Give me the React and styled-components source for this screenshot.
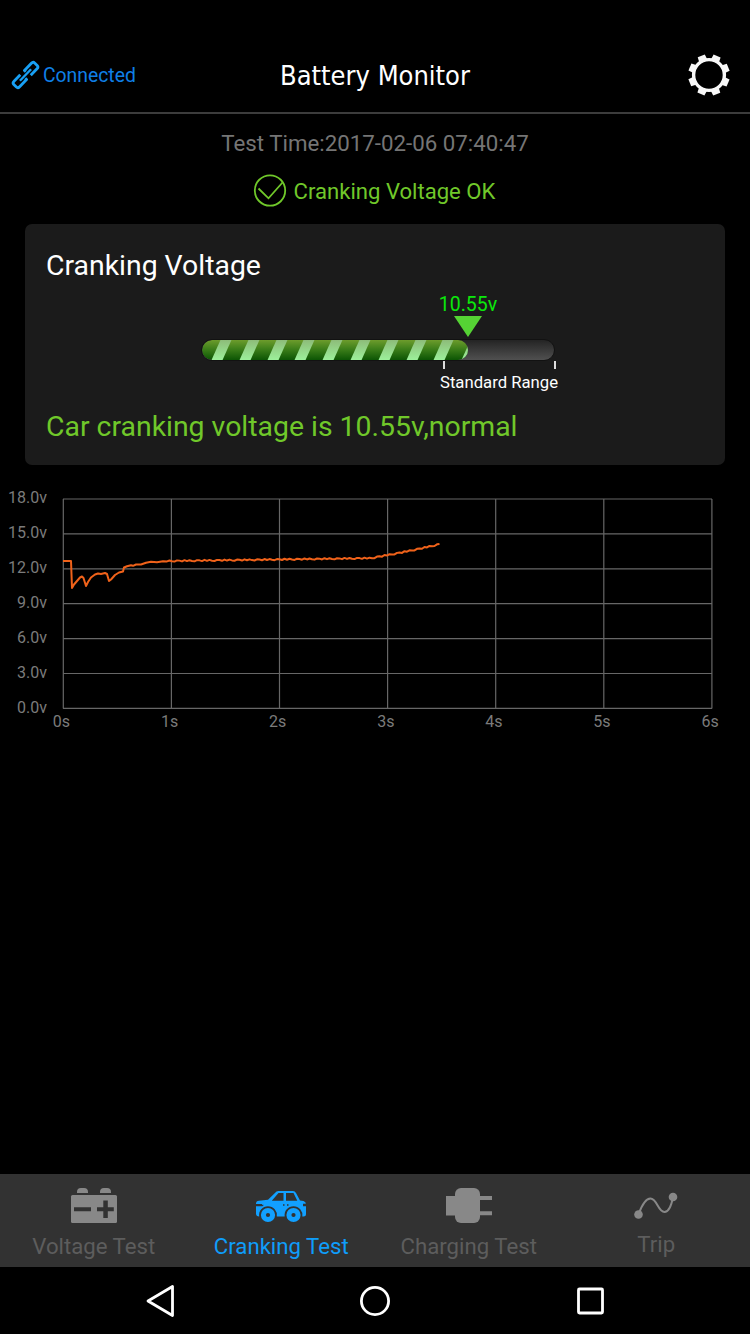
import React from 'react';
import styled, { createGlobalStyle } from 'styled-components';

const GlobalStyle = createGlobalStyle`
  * {
    box-sizing: border-box;
  }
  body {
    margin: 0;
    background: #000;
    font-family: Roboto, sans-serif;
  }
`;

const Screen = styled.div`
  width: 750px;
  height: 1334px;
  display: flex;
  flex-direction: column;
  background: #000;
  overflow: hidden;
`;

const Header = styled.header`
  height: 114px;
  padding: 38px 11px 0;
  display: grid;
  grid-template-columns: 1fr auto 1fr;
  align-items: center;
  border-bottom: 2px solid #3c3c3c;
`;

const Connection = styled.div`
  display: flex;
  align-items: center;
  gap: 3px;
  color: #0f7fe6;
  font-size: 19.35px;
  line-height: 30px;
  padding-top: 2px;

  svg {
    margin-bottom: 2px;
  }
`;

const Title = styled.h1`
  margin: 0;
  padding-top: 2px;
  color: #fff;
  font-family: 'DejaVu Sans Condensed', 'DejaVu Sans', sans-serif;
  font-stretch: condensed;
  font-size: 27px;
  font-weight: 400;
  line-height: 36px;
`;

const SettingsButton = styled.button`
  justify-self: end;
  width: 42px;
  height: 42px;
  margin: 0 9px 1px 0;
  padding: 0;
  border: none;
  background: none;
`;

const TestTime = styled.div`
  margin-top: 15px;
  text-align: center;
  line-height: 28px;
  font-size: 22.3px;
  color: #757575;
`;

const Result = styled.div`
  margin-top: 17px;
  height: 34px;
  padding-right: 2px;
  display: flex;
  justify-content: center;
  align-items: center;
  gap: 7px;
  font-size: 22.1px;
  color: #70c82a;
`;

const Card = styled.section`
  height: 241px;
  margin: 16px 25px 0;
  padding: 24px 21px 0;
  border-radius: 7px;
  background: #1b1b1b;
`;

const CardTitle = styled.h2`
  margin: 0;
  color: #fff;
  font-size: 28.4px;
  font-weight: 400;
  line-height: 36px;
`;

const CardText = styled.p`
  margin: 15px 0 0;
  color: #70c82a;
  font-size: 28.4px;
  line-height: 36px;
`;

const Gauge = styled.div`
  width: 354px;
  margin: 9px 0 0 155px;
`;

const Pointer = styled.div`
  width: 80px;
  margin-left: 227px;
  display: flex;
  flex-direction: column;
  align-items: center;
  color: #0be80b;
  font-size: 19.5px;
  line-height: 23px;
`;

const Arrow = styled.div`
  width: 0;
  border-top: 21px solid #55d334;
  border-left: 14.5px solid transparent;
  border-right: 14.5px solid transparent;
`;

const Track = styled.div`
  height: 22px;
  margin-top: 2px;
  border-radius: 11px;
  border: 1px solid #121212;
  background: linear-gradient(#242424, #505050);
  overflow: hidden;
`;

const Fill = styled.div`
  height: 20px;
  padding-left: 14px;
  display: flex;
  gap: 17.3px;
  border-radius: 10px;
  background: linear-gradient(#6d9c2c, #3d7f1a 45%, #0c5504);
  overflow: hidden;
`;

const Stripe = styled.span`
  flex: none;
  width: 10.5px;
  height: 20px;
  background: linear-gradient(#8dbc79, #9cf09a);
  transform: skewX(-24deg);
`;

const Ticks = styled.div`
  width: 113px;
  height: 8px;
  margin-left: 242px;
  border: 2px solid #ddd;
  border-width: 0 2px;
`;

const RangeLabel = styled.div`
  margin-left: 239px;
  padding-top: 3px;
  color: #fff;
  font-size: 16.7px;
  line-height: 22px;
  white-space: nowrap;
`;

const Chart = styled.svg`
  display: block;
  margin-top: 20px;
  font-family: Roboto, sans-serif;
  font-size: 16px;
`;

const TabBar = styled.nav`
  height: 93px;
  margin-top: auto;
  display: grid;
  grid-template-columns: repeat(4, 1fr);
  background: #323232;
`;

const Tab = styled.div`
  display: flex;
  flex-direction: column;
  align-items: center;
  padding-top: ${({ $top }) => $top || 11}px;
  color: ${({ $active }) => ($active ? '#0f9dfa' : '#5d5d5d')};
  font-size: 22.2px;
  line-height: 28px;

  svg {
    margin-bottom: ${({ $gap }) => $gap || 9}px;
    color: ${({ $active }) => ($active ? '#12a0ff' : '#888')};
  }
`;

const SystemBar = styled.div`
  height: 67px;
  padding: 1px 143px 0 144px;
  display: flex;
  justify-content: space-between;
  align-items: center;
`;

const LinkIcon = () => (
  <svg width="29" height="30" viewBox="-14.5 -15 29 30" fill="none" stroke="#18a0f5" strokeWidth="2.800" strokeLinejoin="round">
    <g transform="rotate(-46)">
      <path d="M2.500-2V-3.900H12.500Q15-3.900 15-1.800V1.800Q15 3.900 12.500 3.900H3.500" />
      <path d="M-2.500 2V3.900H-12.500Q-15 3.900-15 1.800V-1.800Q-15-3.900-12.500-3.900H-3.500" />
      <path d="M-8 0H8" strokeWidth="2.400" />
    </g>
  </svg>
);

const GearIcon = () => (
  <svg width="42" height="42" viewBox="-21 -21 42 42" fill="#f8f8f8">
    <circle r="15.400" fill="none" stroke="#f8f8f8" strokeWidth="3.400" />
    {[0, 1, 2, 3, 4, 5, 6, 7].map(i => (
      <path key={i} d="M-4.300-15L-3.800-20.700H3.800L4.300-15z" transform={`rotate(${i * 45 + 23})`} />
    ))}
  </svg>
);

const CheckIcon = () => (
  <svg width="34" height="34" viewBox="0 0 34 34" fill="none" stroke="#70c82a" strokeWidth="1.8">
    <circle cx="17" cy="16.500" r="15.200" />
    <path d="M5.500 14.500l10 9.800L29.500 8.500" />
  </svg>
);

const BatteryIcon = () => (
  <svg width="48" height="38" viewBox="0 0 48 38" fill="currentColor">
    <path d="M7 8V7q0-4 4-4h3q4 0 4 4v1zM30 8V7q0-4 4-4h3q4 0 4 4v1z" />
    <rect x="1" y="10" width="46" height="28" rx="1.500" />
    <path d="M4 22.300h17v4H4zM27 22.300h6.300v-6.800h4.500v6.800h6v4h-6v6.700h-4.500v-6.700H27z" fill="#323232" />
  </svg>
);

const CarIcon = () => (
  <svg width="52" height="38" viewBox="0 0 52 38" fill="currentColor">
    <path
      fillRule="evenodd"
      d="M1 20v-1.500q0-2.500 3-2.800l9-.9L21.500 6.500Q22.300 6 23.500 6H38q2 0 3 2l4 7.500 3.500.5q2.500.7 2.500 3.500V29q0 2.500-2.500 2.500H47.300A8.900 8.900 0 1 0 29.700 31.500H21.800A8.900 8.900 0 1 0 4.200 31.500Q1 31.500 1 28.500V21.300h6q1.500 0 1.500-1.500zM16.800 15.800H28.500V8h-5zM31 15.800H42.300L38.500 8H31z"
    />
    <path d="M48 18.700H51v2.500h-3zM1 18.900h6v1.900H1zM28 19.300h1.500v1.500H28zM32 19.300h1.500v1.500H32z" fill="#323232" />
    <circle cx="13" cy="30" r="4.600" fill="none" stroke="currentColor" strokeWidth="5" />
    <circle cx="38.500" cy="30" r="4.600" fill="none" stroke="currentColor" strokeWidth="5" />
  </svg>
);

const PlugIcon = () => (
  <svg width="48" height="38" viewBox="0 0 48 38" fill="currentColor">
    <rect x="10" y="3" width="25" height="35" rx="6" />
    <path d="M1 11h10v19.500H1zM34 11h13v4H34zM34 26.300h13v4H34z" />
  </svg>
);

const TripIcon = () => (
  <svg width="46" height="34" viewBox="0 0 46 34" fill="currentColor">
    <circle cx="5.500" cy="26.500" r="4.300" />
    <circle cx="40" cy="9" r="4.300" />
    <path
      d="M5.500 26.500C8.500 18 13 10.500 17.500 10.500c6.500 0 7.500 13.500 14 13.500 4.500 0 7-7 8.500-15"
      fill="none"
      stroke="currentColor"
      strokeWidth="2"
    />
  </svg>
);

const LEFT = 63;
const TOP = 14;
const STEP_X = 108.1;
const STEP_Y = 34.9;

const volts = ['18.0v', '15.0v', '12.0v', '9.0v', '6.0v', '3.0v', '0.0v'];

// cranking dips, [x, y] in chart pixels
const dips = [
  [63, 76], [71, 76], [72, 103], [74, 99.5], [80, 92.5], [82, 91.5], [83.5, 93], [86, 101],
  [88, 97], [91, 92.5], [95, 89.5], [98, 88.5], [101, 89], [105, 88], [107, 89], [109, 96],
  [111, 94.5], [115, 90], [119, 87.5], [123, 86.5], [124, 82.5], [127, 81.3], [131, 80.3],
  [133, 80.8], [136, 79.5], [141, 79.5], [146, 77.8], [151, 76.7], [157, 77.2], [163, 76.3],
];

const jitter = [0.4, -0.5, 0.3, 0.7, -0.4, -0.2, 0.6, -0.6];

const recovery = () => {
  const points = [];
  for (let x = 167; x <= 440; x += 2.5) {
    const base = x < 370 ? 76 - (x - 167) * 0.014 : 73.2 - (x - 370) * 0.17 - Math.pow((x - 370) / 69, 2) * 2.2;
    points.push([x, base + jitter[points.length % jitter.length]]);
  }
  return points;
};

const line = [...dips, ...recovery()].map(p => p.join(',')).join(' ');

const VoltageChart = () => (
  <Chart width="750" height="260" viewBox="0 0 750 260">
    {volts.map((label, i) => (
      <g key={label}>
        <path d={`M${LEFT} ${TOP + i * STEP_Y}H712`} stroke="#676767" strokeWidth="1.2" />
        <text x="47" y={17.5 + i * 35} textAnchor="end" fill="#7b7b7b">{label}</text>
      </g>
    ))}
    {volts.map((label, i) => (
      <g key={label}>
        <path d={`M${LEFT + i * STEP_X + 0.3} ${TOP}V223.500`} stroke="#676767" strokeWidth="1.2" />
        <text x={61.5 + i * STEP_X} y="242" textAnchor="middle" fill="#7b7b7b">{i}s</text>
      </g>
    ))}
    <polyline points={line} fill="none" stroke="#f0621a" strokeWidth="2" strokeLinejoin="round" />
  </Chart>
);

const App = () => (
  <Screen>
    <GlobalStyle />
    <Header>
      <Connection>
        <LinkIcon />
        Connected
      </Connection>
      <Title>Battery Monitor</Title>
      <SettingsButton>
        <GearIcon />
      </SettingsButton>
    </Header>
    <TestTime>Test Time:2017-02-06 07:40:47</TestTime>
    <Result>
      <CheckIcon />
      Cranking Voltage OK
    </Result>
    <Card>
      <CardTitle>Cranking Voltage</CardTitle>
      <Gauge>
        <Pointer>
          10.55v
          <Arrow />
        </Pointer>
        <Track>
          <Fill style={{ width: 266 }}>
            {Array.from({ length: 10 }, (_, i) => <Stripe key={i} />)}
          </Fill>
        </Track>
        <Ticks />
        <RangeLabel>Standard Range</RangeLabel>
      </Gauge>
      <CardText>Car cranking voltage is 10.55v,normal</CardText>
    </Card>
    <VoltageChart />
    <TabBar>
      <Tab>
        <BatteryIcon />
        Voltage Test
      </Tab>
      <Tab $active>
        <CarIcon />
        Cranking Test
      </Tab>
      <Tab>
        <PlugIcon />
        Charging Test
      </Tab>
      <Tab $top={14} $gap={8}>
        <TripIcon />
        Trip
      </Tab>
    </TabBar>
    <SystemBar>
      <svg width="32" height="34" viewBox="0 0 32 34" fill="none" stroke="#fff" strokeWidth="2.8" strokeLinejoin="round">
        <path d="M28.500 2.500v29L4 17z" />
      </svg>
      <svg width="32" height="32" viewBox="0 0 32 32" fill="none" stroke="#fff" strokeWidth="2.8">
        <circle cx="15" cy="16" r="13.600" />
      </svg>
      <svg width="32" height="32" viewBox="0 0 32 32" fill="none" stroke="#fff" strokeWidth="2.8">
        <rect x="3.500" y="4" width="24" height="24" rx="1" />
      </svg>
    </SystemBar>
  </Screen>
);

export default App;
